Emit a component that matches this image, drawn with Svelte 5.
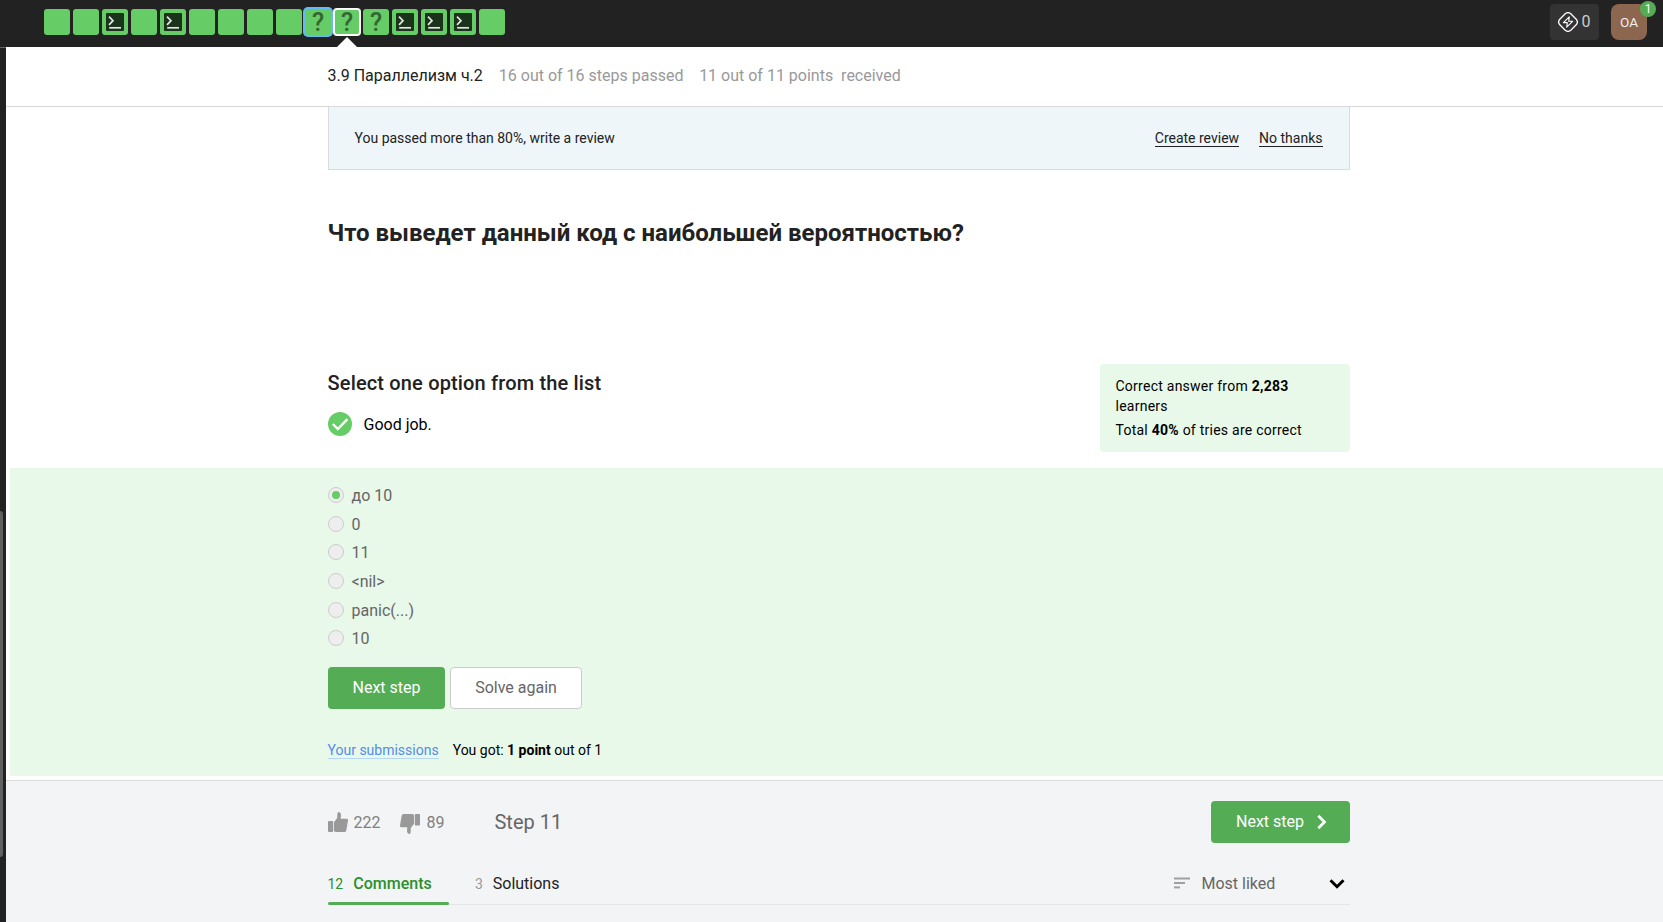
<script>
  const steps = ['', '', 'code', '', 'code', '', '', '', '', 'quiz', 'quiz', 'quiz', 'code', 'code', 'code', ''];
  const visited = 9;
  const current = 10;
  const options = ['до 10', '0', '11', '<nil>', 'panic(...)', '10'];
  let selected = $state(0);
</script>

<div class="page">
  <header class="topbar">
    <div class="steps">
      {#each steps as kind, i}
        <div class="step" class:visited={i === visited} class:current={i === current}>
          {#if kind === 'code'}
            <svg width="18" height="18" viewBox="0 0 18 18">
              <rect width="18" height="18" rx="1" fill="#1a331a" />
              <path d="M3 3.6 7 7.7 3 11.8" fill="none" stroke="#e0e6e0" stroke-width="1.7" />
              <path d="M3.2 14.8H15" stroke="#e0e6e0" stroke-width="1.7" />
            </svg>
          {:else if kind === 'quiz'}
            <span>?</span>
          {/if}
        </div>
      {/each}
    </div>
    <div class="energy">
      <svg width="20" height="20" viewBox="0 0 20 20" fill="none" stroke="#fff" stroke-width="1.3" stroke-linejoin="round">
        <path d="M7.2 1.8Q10 -.6 12.8 1.8L18.2 7.2Q20.6 10 18.2 12.8L12.8 18.2Q10 20.6 7.2 18.2L1.8 12.8Q-.6 10 1.8 7.2Z" />
        <path d="M11.3 4.8 5.4 10.6H9.3L8.7 15.2 14.6 9.3H10.7Z" stroke-width="1.1" />
      </svg>
      <span>0</span>
    </div>
    <div class="avatar">OA<span class="count">1</span></div>
  </header>

  <div class="body">
    <aside><div class="thumb"></div></aside>
    <main>
      <div class="subheader">
        <span class="lesson">3.9 Параллелизм ч.2</span>
        <span class="passed">16 out of 16 steps passed</span>
        <span>11 out of 11 points&nbsp; received</span>
      </div>

      <section class="content">
        <div class="banner">
          <span>You passed more than 80%, write a review</span>
          <div class="links"><a href="#review">Create review</a><a href="#dismiss">No thanks</a></div>
        </div>
        <h1>Что выведет данный код с наибольшей вероятностью?</h1>
        <div class="result">
          <div>
            <h2>Select one option from the list</h2>
            <div class="status">
              <svg width="24" height="24" viewBox="0 0 24 24">
                <circle cx="12" cy="12" r="12" fill="#66cc66" />
                <path d="m4.8 12 5 5.1L19.4 7.2" fill="none" stroke="#fff" stroke-width="2.4" />
              </svg>
              <span>Good job.</span>
            </div>
          </div>
          <div class="stats">
            <p>Correct answer from <b>2,283</b> learners</p>
            <p>Total <b>40%</b> of tries are correct</p>
          </div>
        </div>
      </section>

      <section class="quiz">
        <div class="options">
          {#each options as option, i}
            <div class="option"><span class="radio" class:on={i === selected}></span><span class="label">{option}</span></div>
          {/each}
        </div>
        <div class="actions">
          <button class="primary">Next step</button>
          <button class="secondary">Solve again</button>
        </div>
        <div class="score"><a href="#submissions">Your submissions</a><span>You got: <b>1 point</b> out of 1</span></div>
      </section>

      <footer>
        <div class="toolbar">
          <svg class="up" width="20" height="20" viewBox="0 0 20 20" fill="#999">
            <rect y="9" width="5.2" height="11" rx="1" />
            <path d="M6 10.2 9.2 6.1 9.4 1.6Q9.5 0 10.8 0 12.7.1 13 2.4L12.7 6.7H18.6Q20.2 6.8 20 8.5L18.3 18.5Q18 20 16.5 20H8Q6.7 20 6 18.8Z" />
          </svg>
          <span class="votes">222</span>
          <svg class="down" width="20" height="20" viewBox="0 0 20 20" fill="#999">
            <g transform="rotate(180 10 10)">
              <rect y="8.5" width="5.2" height="11.5" rx="1" />
              <path d="M6 10.2 9.2 6.1 9.4 1.6Q9.5 0 10.8 0 12.7.1 13 2.4L12.7 6.7H18.6Q20.2 6.8 20 8.5L18.3 18.5Q18 20 16.5 20H8Q6.7 20 6 18.8Z" />
            </g>
          </svg>
          <span class="votes">89</span>
          <span class="step-name">Step 11</span>
          <button class="primary next">Next step
            <svg width="10" height="16" viewBox="0 0 10 16"><path d="m1.3 1.7 6.2 6.3-6.2 6.3" fill="none" stroke="#fff" stroke-width="2.7" /></svg>
          </button>
        </div>
        <div class="tabs">
          <div class="tab active"><small>12</small><span>Comments</span></div>
          <div class="tab"><small>3</small><span>Solutions</span></div>
          <div class="sort">
            <svg width="16" height="12" viewBox="0 0 16 12" fill="#a0a0a4"><rect y="0.5" width="16" height="2" /><rect y="5" width="11" height="2" /><rect y="9.4" width="6" height="2" /></svg>
            <span>Most liked</span>
            <svg class="chevron" width="16" height="10" viewBox="0 0 16 10"><path d="m1.5 1.2 6.5 6.5 6.5-6.5" fill="none" stroke="#000" stroke-width="3" /></svg>
          </div>
        </div>
      </footer>
    </main>
  </div>
</div>

<style>
  :global(body) { margin: 0; overflow: hidden; }
  * { box-sizing: border-box; }
  .page { width: 1663px; height: 922px; overflow: hidden; background: #fff; color: #222; font: 16px/24px Roboto, sans-serif; }
  h1, h2, p { margin: 0; }
  button { font: inherit; padding: 0; }
  b { font-weight: 700; }
  .topbar { height: 47px; background: #222; display: flex; align-items: flex-start; padding-left: 44px; }
  .steps { display: flex; gap: 3px; padding-top: 9px; flex: 1; }
  .step { position: relative; width: 26px; height: 26px; border-radius: 3px; background: #66cc66; display: flex; align-items: center; justify-content: center; }
  .step span { font-weight: 500; font-size: 25px; line-height: 26px; padding-top: 2px; color: #336633; }
  .visited { box-shadow: 0 0 0 2px #64baf5; }
  .current { box-shadow: inset 0 0 0 1px #fff, 0 0 0 1px #fff; }
  .current::after { content: ''; position: absolute; top: 28px; left: 3px; border: 10px solid transparent; border-top: 0; border-bottom-color: #fff; }
  .energy { width: 49px; height: 36px; margin-top: 4px; border-radius: 4px; background: #333; display: flex; align-items: center; padding-left: 8px; gap: 3.5px; color: #ccc; }
  .avatar { position: relative; width: 36px; height: 36px; margin: 4px 16px 0 12px; border-radius: 8px; background: #8d6650; color: #f4efed; font-size: 13.5px; line-height: 36px; text-align: center; }
  .count { position: absolute; top: -3px; right: -9px; width: 16px; height: 16px; border-radius: 50%; background: #54ad54; color: #fff; font-size: 12px; line-height: 16px; }
  .body { display: flex; height: 875px; }
  aside { width: 6px; background: #222; border-top: 1px solid #666; padding-top: 463px; }
  .thumb { width: 3px; height: 346px; background: #606060; border-radius: 0 3px 3px 0; }
  main { flex: 1; }
  .subheader { height: 60px; border-bottom: 1px solid #d9d9dc; padding-left: 321.5px; display: flex; align-items: center; color: #999; padding-bottom: 1px; }
  .lesson { color: #222; margin-right: 16px; }
  .passed { margin-right: 15.7px; }
  .content { width: 1022px; margin-left: 321.5px; height: 361px; }
  .banner { height: 63px; border: 1px solid #d9dadd; border-top: 0; background: #eef6f9; display: flex; align-items: center; justify-content: space-between; padding: 0 26px; font-size: 14px; line-height: 20px; }
  .links { display: flex; gap: 20px; }
  .links a { color: #222; text-decoration: none; line-height: 16px; border-bottom: 1px solid #222; }
  h1 { font-size: 24px; line-height: 32px; font-weight: 700; margin-top: 47px; }
  .result { display: flex; justify-content: space-between; margin-top: 115px; }
  h2 { font-size: 20px; line-height: 28px; font-weight: 500; margin-top: 5px; letter-spacing: 0.16px; }
  .status { display: flex; gap: 12px; margin-top: 15px; color: #000; }
  .status span { padding-top: 1px; }
  .stats { width: 250px; height: 88px; border-radius: 4px; background: #e8f8e9; color: #000; padding: 12px 10px 12px 16px; font-size: 14px; line-height: 20px; letter-spacing: 0.25px; }
  .stats p + p { margin-top: 4px; }
  .quiz { height: 308px; margin-left: 4px; padding-left: 317.5px; background: #e8f8e9; }
  .options { padding-top: 12.9px; height: 199px; color: #666; }
  .option { height: 28.6px; display: flex; align-items: center; gap: 8px; }
  .label { margin-top: 2px; }
  .radio { width: 16px; height: 16px; border: 1px solid #ccc; border-radius: 50%; background: #eee; display: grid; place-items: center; }
  .on::after { content: ''; width: 8px; height: 8px; border-radius: 50%; background: #66cc66; }
  .actions { display: flex; gap: 5px; }
  .primary { width: 117px; height: 42px; border: 0; border-radius: 4px; background: #54ad54; color: #fff; padding-left: 1px; }
  .secondary { width: 132px; height: 42px; border: 1px solid #ccc; border-radius: 4px; background: #fff; color: #666; padding-left: 1px; }
  .score { display: flex; gap: 14px; align-items: flex-start; margin-top: 33px; font-size: 14px; line-height: 16px; color: #000; }
  .score a { color: #548ceb; text-decoration: none; border-bottom: 1px solid #b3d7f5; }
  footer { margin-top: 4px; border-top: 1px solid #d9dadd; background: #f3f4f6; height: 142px; padding-left: 321.5px; }
  .toolbar { width: 1022px; height: 82px; display: flex; align-items: center; }
  .votes { color: #808080; margin: 2px 0 0 6px; }
  .down { margin: 4px 0 0 20px; }
  .step-name { font-size: 20px; color: #666; margin-left: 50px; flex: 1; }
  .next { width: 139px; display: flex; align-items: center; justify-content: center; gap: 12.5px; padding-left: 2.5px; }
  .tabs { width: 1022px; height: 42px; display: flex; border-bottom: 1px solid #e4e5e7; }
  .tab { height: 42px; padding-top: 9px; display: flex; line-height: 24px; margin-right: 26.4px; }
  .tab small { font-size: 14px; color: #999; margin-right: 10px; }
  .active { width: 121px; position: relative; color: #2a902a; font-weight: 500; }
  .active small { color: #2a902a; font-weight: 400; }
  .active::after { content: ''; position: absolute; left: 0; right: 0; bottom: 0; height: 3px; border-radius: 2px; background: #54ad54; }
  .sort { margin-left: auto; display: flex; align-items: center; width: 176px; height: 40px; color: #666; }
  .sort span { margin: 2px 0 0 12px; }
  .chevron { margin: 2px 5px 0 auto; }
</style>
